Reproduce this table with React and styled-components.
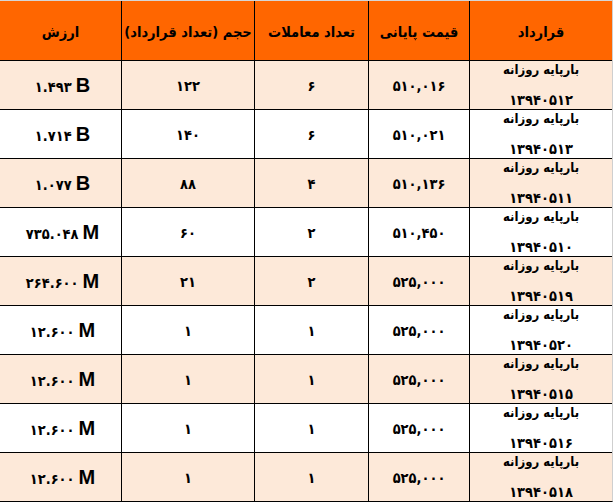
import React from "react";
import styled, { createGlobalStyle } from "styled-components";

const Global = createGlobalStyle`
  html, body { margin: 0; padding: 0; background: #ffffff; }
  body { font-family: "DejaVu Sans Condensed", "DejaVu Sans", sans-serif; font-stretch: condensed; }
`;

const Table = styled.div`
  direction: rtl;
  width: 613px;
  box-sizing: border-box;
  display: grid;
  grid-template-columns: 142px 100px 113px 132px 121px;
  grid-template-rows: 59px repeat(9, 48px);
  gap: 1px;
  background: #000;
  border-top: 1px solid #d6d6d6;
  border-right: 1px solid #cfcfcf;
  border-bottom: 1px solid #000;
`;

const HeadCell = styled.div`
  background: #ff6600;
  color: #000;
  font-weight: 700;
  font-size: 14.5px;
  display: flex;
  align-items: center;
  justify-content: center;
  white-space: nowrap;
  padding-top: 2px;
`;

const Cell = styled.div`
  background: ${(p) => (p.$alt ? "#fde9d9" : "#ffffff")};
  color: #000;
  font-weight: 700;
  font-size: 14.5px;
  display: flex;
  align-items: center;
  justify-content: center;
  white-space: nowrap;
  overflow: visible;
`;

const Num = styled.span`
  letter-spacing: -0.4px;
  padding-top: 2px;
`;

const Contract = styled.div`
  display: flex;
  flex-direction: column;
  align-items: center;
  line-height: 31px;
  height: 62px;
`;

const ContractName = styled.span`
  font-size: 13px;
  font-weight: 700;
`;

const ContractCode = styled.span`
  font-size: 14.5px;
  font-weight: 700;
  letter-spacing: -0.4px;
`;

const Value = styled.span`
  direction: ltr;
  display: inline-flex;
  align-items: baseline;
  gap: 4px;
  padding-left: 4px;
`;

const Unit = styled.span`
  font-family: "Liberation Sans", Arial, sans-serif;
  font-size: 20px;
  font-weight: 700;
  font-stretch: normal;
`;

const headers = ["قرارداد", "قیمت پایانی", "تعداد معاملات", "حجم (تعداد قرارداد)", "ارزش"];

const rows = [
  { code: "۱۳۹۴۰۵۱۲", price: "۵۱۰,۰۱۶", trades: "۶", vol: "۱۲۲", val: "۱.۴۹۳", unit: "B" },
  { code: "۱۳۹۴۰۵۱۳", price: "۵۱۰,۰۲۱", trades: "۶", vol: "۱۴۰", val: "۱.۷۱۴", unit: "B" },
  { code: "۱۳۹۴۰۵۱۱", price: "۵۱۰,۱۳۶", trades: "۴", vol: "۸۸", val: "۱.۰۷۷", unit: "B" },
  { code: "۱۳۹۴۰۵۱۰", price: "۵۱۰,۴۵۰", trades: "۲", vol: "۶۰", val: "۷۳۵.۰۴۸", unit: "M" },
  { code: "۱۳۹۴۰۵۱۹", price: "۵۲۵,۰۰۰", trades: "۲", vol: "۲۱", val: "۲۶۴.۶۰۰", unit: "M" },
  { code: "۱۳۹۴۰۵۲۰", price: "۵۲۵,۰۰۰", trades: "۱", vol: "۱", val: "۱۲.۶۰۰", unit: "M" },
  { code: "۱۳۹۴۰۵۱۵", price: "۵۲۵,۰۰۰", trades: "۱", vol: "۱", val: "۱۲.۶۰۰", unit: "M" },
  { code: "۱۳۹۴۰۵۱۶", price: "۵۲۵,۰۰۰", trades: "۱", vol: "۱", val: "۱۲.۶۰۰", unit: "M" },
  { code: "۱۳۹۴۰۵۱۸", price: "۵۲۵,۰۰۰", trades: "۱", vol: "۱", val: "۱۲.۶۰۰", unit: "M" },
];

export default function App() {
  return (
    <>
      <Global />
      <Table>
        {headers.map((h) => (
          <HeadCell key={h}>{h}</HeadCell>
        ))}
        {rows.map((r, i) => {
          const alt = i % 2 === 0;
          return (
            <React.Fragment key={i}>
              <Cell $alt={alt}>
                <Contract>
                  <ContractName>بارپایه روزانه</ContractName>
                  <ContractCode>{r.code}</ContractCode>
                </Contract>
              </Cell>
              <Cell $alt={alt}><Num>{r.price}</Num></Cell>
              <Cell $alt={alt}><Num>{r.trades}</Num></Cell>
              <Cell $alt={alt}><Num>{r.vol}</Num></Cell>
              <Cell $alt={alt}>
                <Value>
                  <Num>{r.val}</Num>
                  <Unit>{r.unit}</Unit>
                </Value>
              </Cell>
            </React.Fragment>
          );
        })}
      </Table>
    </>
  );
}
